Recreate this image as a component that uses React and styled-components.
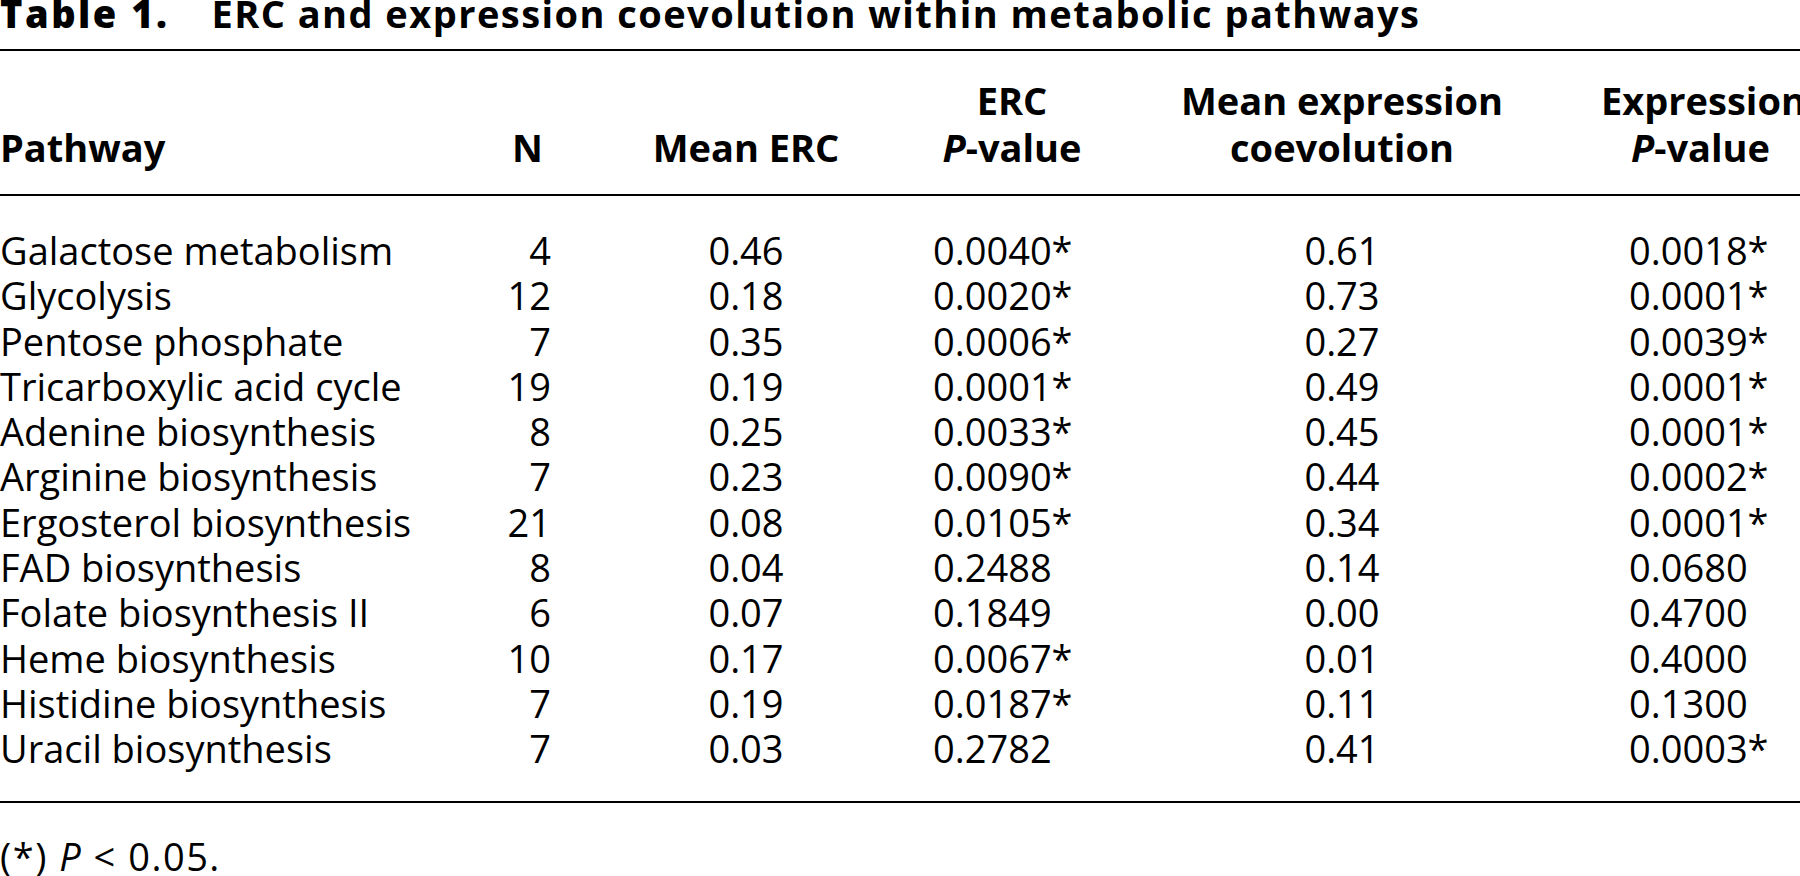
import React from "react";
import styled, { createGlobalStyle } from "styled-components";

const Global = createGlobalStyle`
  html, body {
    margin: 0;
    padding: 0;
    background: #ffffff;
    overflow: hidden;
  }
  body {
    font-family: "Open Sans", "Noto Sans", "Liberation Sans", sans-serif;
    color: #000000;
  }
`;

const Page = styled.div`
  width: 1800px;
  height: 876px;
  overflow: hidden;
`;

const Title = styled.h1`
  margin: 0;
  padding-top: 1px;
  padding-bottom: 23px;
  font-size: 38px;
  line-height: 25px;
  font-weight: 700;
  letter-spacing: 1.45px;
  white-space: nowrap;
`;

const TitleLabel = styled.span`
  font-weight: 800;
  letter-spacing: 2.5px;
  margin-right: 42px;
`;

const Rule = styled.div`
  height: 2px;
  background: #000000;
`;

const Grid = styled.div`
  display: grid;
  grid-template-columns: 470px 81px 390px 142px 518px 199px;
`;

const HeadRow = styled(Grid)`
  padding: 26px 0 23px;
  align-items: end;
  font-size: 38px;
  line-height: 47px;
  font-weight: 700;
`;

const HeadCell = styled.div`
  text-align: ${(p) => p.$align || "center"};
  padding-right: ${(p) => p.$pr || 0}px;
  white-space: nowrap;
`;

const Body = styled.div`
  padding: 32px 0 29px;
`;

const Row = styled(Grid)`
  font-size: 38px;
  line-height: 45.3px;
  font-weight: 400;
`;

const Cell = styled.div`
  text-align: ${(p) => p.$align || "left"};
  margin-left: ${(p) => p.$ml || 0}px;
  white-space: nowrap;
`;

const Foot = styled.p`
  margin: 31px 0 0;
  font-size: 38px;
  line-height: 45px;
  letter-spacing: 1.5px;
  white-space: nowrap;
`;

const I = styled.i`
  font-style: italic;
`;

const rows = [
  ["Galactose metabolism", "4", "0.46", "0.0040*", "0.61", "0.0018*"],
  ["Glycolysis", "12", "0.18", "0.0020*", "0.73", "0.0001*"],
  ["Pentose phosphate", "7", "0.35", "0.0006*", "0.27", "0.0039*"],
  ["Tricarboxylic acid cycle", "19", "0.19", "0.0001*", "0.49", "0.0001*"],
  ["Adenine biosynthesis", "8", "0.25", "0.0033*", "0.45", "0.0001*"],
  ["Arginine biosynthesis", "7", "0.23", "0.0090*", "0.44", "0.0002*"],
  ["Ergosterol biosynthesis", "21", "0.08", "0.0105*", "0.34", "0.0001*"],
  ["FAD biosynthesis", "8", "0.04", "0.2488", "0.14", "0.0680"],
  ["Folate biosynthesis II", "6", "0.07", "0.1849", "0.00", "0.4700"],
  ["Heme biosynthesis", "10", "0.17", "0.0067*", "0.01", "0.4000"],
  ["Histidine biosynthesis", "7", "0.19", "0.0187*", "0.11", "0.1300"],
  ["Uracil biosynthesis", "7", "0.03", "0.2782", "0.41", "0.0003*"],
];

export default function App() {
  return (
    <Page>
      <Global />
      <Title>
        <TitleLabel>Table 1.</TitleLabel>
        ERC and expression coevolution within metabolic pathways
      </Title>
      <Rule />
      <HeadRow>
        <HeadCell $align="left">Pathway</HeadCell>
        <HeadCell $align="right" $pr={8}>N</HeadCell>
        <HeadCell>Mean ERC</HeadCell>
        <HeadCell>
          ERC
          <br />
          <I>P</I>-value
        </HeadCell>
        <HeadCell>
          Mean expression
          <br />
          coevolution
        </HeadCell>
        <HeadCell>
          Expression
          <br />
          <I>P</I>-value
        </HeadCell>
      </HeadRow>
      <Rule />
      <Body>
        {rows.map((r) => (
          <Row key={r[0]}>
            <Cell>{r[0]}</Cell>
            <Cell $align="right">{r[1]}</Cell>
            <Cell $align="center">{r[2]}</Cell>
            <Cell $ml={-8}>{r[3]}</Cell>
            <Cell $align="center">{r[4]}</Cell>
            <Cell $ml={28}>{r[5]}</Cell>
          </Row>
        ))}
      </Body>
      <Rule />
      <Foot>
        (*) <I>P</I> &lt; 0.05.
      </Foot>
    </Page>
  );
}
